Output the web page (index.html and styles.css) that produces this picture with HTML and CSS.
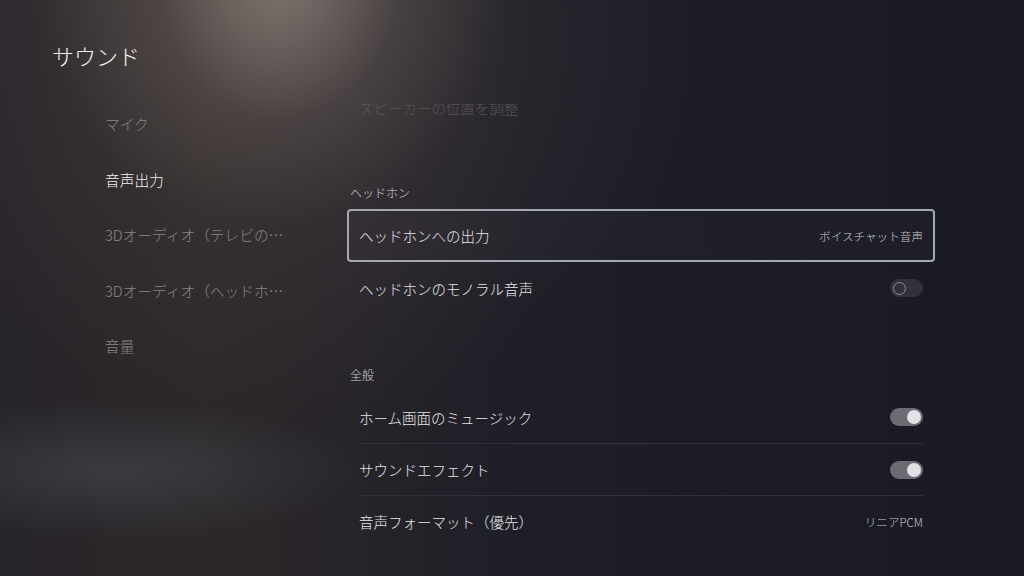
FILE: index.html
```html
<!DOCTYPE html>
<html lang="ja">
<head>
<meta charset="utf-8">
<title>サウンド</title>
<link rel="stylesheet" href="styles.css">
</head>
<body>
<div class="screen">
  <aside class="sidebar">
    <h1 class="title">サウンド</h1>
    <nav class="menu">
      <div class="menu-item">マイク</div>
      <div class="menu-item active">音声出力</div>
      <div class="menu-item">3Dオーディオ（テレビの…</div>
      <div class="menu-item">3Dオーディオ（ヘッドホ…</div>
      <div class="menu-item">音量</div>
    </nav>
  </aside>
  <main class="pane">
    <div class="list">
      <div class="row faded"><div class="row-inner"><span class="label">スピーカーの位置を調整</span></div></div>
      <div class="section">ヘッドホン</div>
      <div class="row focused"><div class="row-inner"><span class="label">ヘッドホンへの出力</span><span class="value">ボイスチャット音声</span></div></div>
      <div class="row"><div class="row-inner"><span class="label">ヘッドホンのモノラル音声</span><span class="toggle off"><span class="knob"></span></span></div></div>
      <div class="section second">全般</div>
      <div class="row"><div class="row-inner"><span class="label">ホーム画面のミュージック</span><span class="toggle on"><span class="knob"></span></span></div></div>
      <div class="row divided"><div class="row-inner"><span class="label">サウンドエフェクト</span><span class="toggle on"><span class="knob"></span></span></div></div>
      <div class="row divided"><div class="row-inner"><span class="label">音声フォーマット（優先）</span><span class="value">リニアPCM</span></div></div>
    </div>
  </main>
</div>
</body>
</html>
```
FILE: styles.css
```css
html, body {
  margin: 0;
  padding: 0;
}
body {
  width: 1024px;
  height: 576px;
  overflow: hidden;
  font-family: "Noto Sans CJK JP", "Noto Sans", sans-serif;
  font-weight: 300;
  color: #e8e8ea;
  background:
    radial-gradient(ellipse 120px 140px at 280px -20px, rgba(160,148,140,0.45), rgba(160,148,140,0) 100%),
    radial-gradient(ellipse 240px 270px at 270px -40px, rgba(125,112,106,0.6), rgba(125,112,106,0) 100%),
    radial-gradient(ellipse 420px 380px at 280px 40px, rgba(85,74,72,0.45), rgba(85,74,72,0) 100%),
    radial-gradient(ellipse 260px 70px at 110px 470px, rgba(95,102,116,0.32), rgba(95,102,116,0) 100%),
    linear-gradient(to right, #27242a 0%, #2c2829 20%, #27242a 34%, #1d1e27 52%, #191a24 100%);
}
.screen {
  display: grid;
  grid-template-columns: 347px 588px;
  height: 576px;
}
.sidebar {
  padding: 40px 0 0 52px;
}
.title {
  margin: 0;
  font-size: 22px;
  font-weight: 300;
  line-height: 30px;
  color: #f2f2f2;
}
.menu {
  margin-top: 26px;
  padding-left: 53px;
}
.menu-item {
  height: 55.5px;
  display: flex;
  align-items: center;
  font-size: 14.7px;
  color: #8a8486;
  white-space: nowrap;
}
.menu-item.active {
  color: #f0f0f0;
}
.pane {
  padding-top: 104px;
}
.list {
  overflow: hidden;
  height: 460px;
}
.row {
  height: 52px;
  padding: 0 12px;
  box-sizing: border-box;
}
.row-inner {
  height: 100%;
  display: flex;
  align-items: center;
  justify-content: space-between;
}
.row.divided .row-inner {
  border-top: 1px solid #30313a;
  box-sizing: border-box;
}
.label {
  font-size: 14.5px;
  color: #e6e6e8;
}
.value {
  font-size: 11.6px;
  color: #c9c9cc;
}
.row.faded {
  margin-top: -23px;
}
.row.faded .label {
  color: #58535a;
}
.row.focused {
  height: 53px;
  border: 2px solid #a3a7b0;
  border-radius: 4px;
  padding: 0 10px;
  background: rgba(255,255,255,0.015);
}
.section {
  height: 76px;
  box-sizing: border-box;
  display: flex;
  align-items: flex-end;
  padding: 0 0 8px 3px;
  font-size: 12px;
  line-height: 16px;
  color: #d2d2d4;
}
.section.second {
  height: 77px;
}
.toggle {
  width: 33px;
  height: 18px;
  border-radius: 9px;
  display: flex;
  align-items: center;
  box-sizing: border-box;
  padding: 0 2px;
}
.toggle .knob {
  width: 14px;
  height: 14px;
  border-radius: 50%;
  box-sizing: border-box;
}
.toggle.off {
  background: #32323c;
  justify-content: flex-start;
}
.toggle.off .knob {
  border: 1.5px solid #8d8d95;
  width: 13px;
  height: 13px;
  margin-left: 1px;
}
.toggle.on {
  background: #6b6b73;
  justify-content: flex-end;
}
.toggle.on .knob {
  background: #e2e2e6;
}
```
